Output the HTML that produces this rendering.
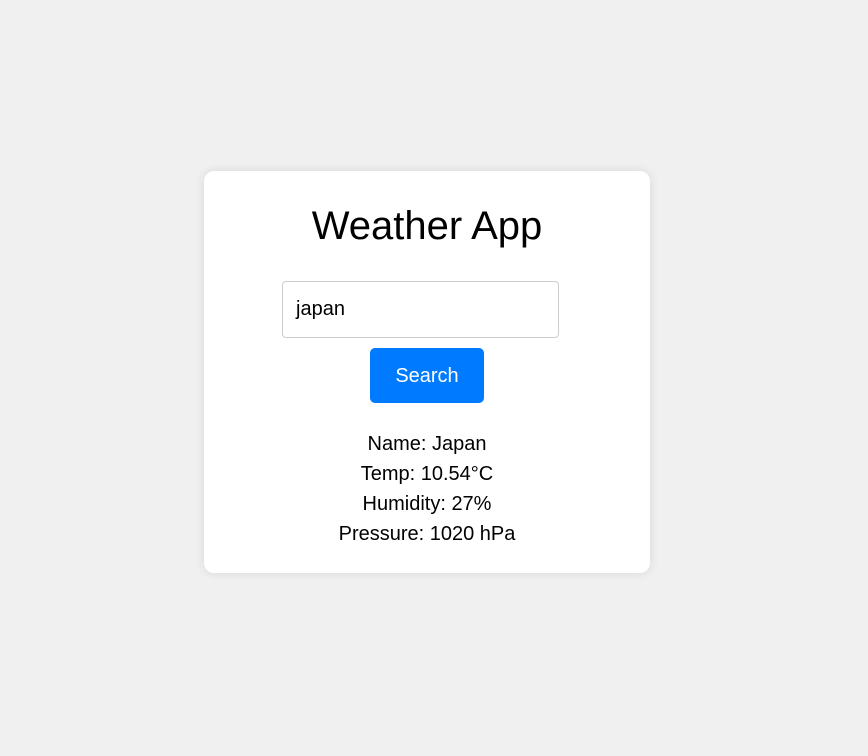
<!DOCTYPE html>
<html><head><style>
html,body{margin:0;padding:0;width:868px;height:756px;background:#f0f0f0;font-family:"Liberation Sans",Arial,sans-serif;overflow:hidden}
.card{position:absolute;left:204px;top:171px;width:446px;height:402px;background:#fff;border-radius:10px;box-shadow:0 0 10px rgba(0,0,0,0.1)}
h1{position:absolute;left:0;width:446px;top:31px;margin:0;text-align:center;font-weight:normal;font-size:40px;line-height:48px;color:#000}
.inp{position:absolute;left:78px;top:110px;height:55px;border:1px solid #ccc;border-radius:4px;font-size:20px;line-height:55px;padding-left:13px;box-sizing:content-box;width:262px}
.btn{position:absolute;left:166px;top:177px;width:114px;height:55px;background:#007bff;border-radius:5px;color:#fff;font-size:20px;line-height:57px;text-align:center}
.res{position:absolute;left:0;width:446px;top:258px;text-align:center;font-size:20px;line-height:30px;color:#000}
</style></head><body>
<div class="card">
<h1>Weather App</h1>
<div class="inp">japan</div>
<div class="btn">Search</div>
<div class="res">Name: Japan<br>Temp: 10.54°C<br>Humidity: 27%<br>Pressure: 1020 hPa</div>
</div>
</body></html>
